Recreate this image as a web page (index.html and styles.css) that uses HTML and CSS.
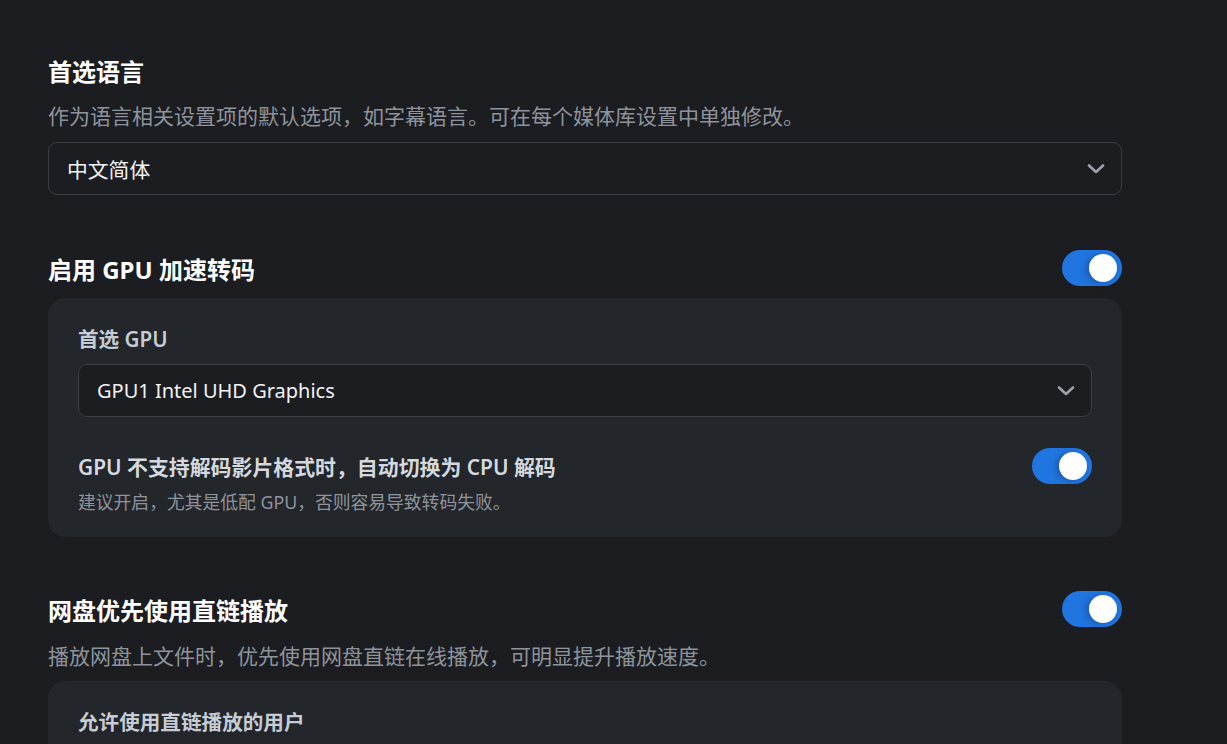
FILE: index.html
```html
<!DOCTYPE html>
<html lang="zh-CN">
<head>
<meta charset="utf-8">
<title>设置</title>
<link rel="stylesheet" href="styles.css">
</head>
<body>
<main class="page">
  <section class="setting">
    <div class="head"><h2 class="title">首选语言</h2></div>
    <p class="desc d1">作为语言相关设置项的默认选项，如字幕语言。可在每个媒体库设置中单独修改。</p>
    <div class="select">
      <span>中文简体</span>
      <svg class="chev" width="18" height="10" viewBox="0 0 18 10"><path d="M2 1.5 L9 8 L16 1.5" fill="none" stroke="#9ea3aa" stroke-width="2.6" stroke-linecap="round" stroke-linejoin="round"/></svg>
    </div>
  </section>

  <section class="setting s2">
    <div class="head">
      <h2 class="title">启用 GPU 加速转码</h2>
      <span class="toggle"><span class="knob"></span></span>
    </div>
    <div class="card">
      <div class="label">首选 GPU</div>
      <div class="select inner">
        <span class="latin">GPU1 Intel UHD Graphics</span>
        <svg class="chev" width="18" height="10" viewBox="0 0 18 10"><path d="M2 1.5 L9 8 L16 1.5" fill="none" stroke="#9ea3aa" stroke-width="2.6" stroke-linecap="round" stroke-linejoin="round"/></svg>
      </div>
      <div class="row">
        <div class="row-text">
          <div class="row-title">GPU 不支持解码影片格式时，自动切换为 CPU 解码</div>
          <div class="row-desc">建议开启，尤其是低配 GPU，否则容易导致转码失败。</div>
        </div>
        <span class="toggle"><span class="knob"></span></span>
      </div>
    </div>
  </section>

  <section class="setting s3">
    <div class="head">
      <h2 class="title">网盘优先使用直链播放</h2>
      <span class="toggle"><span class="knob"></span></span>
    </div>
    <p class="desc d3">播放网盘上文件时，优先使用网盘直链在线播放，可明显提升播放速度。</p>
    <div class="card c3">
      <div class="label">允许使用直链播放的用户</div>
    </div>
  </section>
</main>
</body>
</html>
```

FILE: styles.css
```css
* { box-sizing: border-box; }

html, body {
  margin: 0;
  padding: 0;
  background: #1b1d21;
  height: 100%;
  overflow: hidden;
}

body {
  font-family: "Noto Sans", "Noto Sans CJK SC", sans-serif;
  color: #e6e8eb;
}

.page {
  width: 1122px;
  padding: 52px 0 0 48px;
}

.setting {
  display: flex;
  flex-direction: column;
}

.s2 { margin-top: 55px; }
.s3 { margin-top: 54px; }

.head {
  height: 36px;
  display: flex;
  align-items: center;
  justify-content: space-between;
}

.title {
  margin: 0;
  font-size: 24px;
  font-weight: 700;
  color: #ffffff;
  line-height: 32px;
  padding-top: 3px;
}

.desc {
  margin: 11px 0 0;
  font-size: 21px;
  line-height: 30px;
  color: #8f949c;
}

.d1 { margin-top: 13px; }
.d3 { margin-top: 14px; }

.select {
  margin-top: 11px;
  height: 53px;
  border: 1px solid #3a3d43;
  border-radius: 9px;
  background: #1b1d21;
  display: flex;
  align-items: center;
  justify-content: space-between;
  padding: 0 16px 0 18px;
  font-size: 20.8px;
  color: #f2f3f5;
}

.latin { font-size: 20px; }

.chev { display: block; }

.card {
  margin-top: 12px;
  background: #23262b;
  border-radius: 17px;
  padding: 30px 30px 22px;
}

.c3 { margin-top: 10px; height: 80px; }

.label {
  font-size: 20.6px;
  font-weight: 600;
  line-height: 22px;
  color: #c6ccd4;
}

.select.inner {
  margin-top: 14px;
}

.row {
  margin-top: 31px;
  display: flex;
  justify-content: space-between;
  align-items: flex-start;
}

.row-text {
  padding-top: 4px;
}

.row-title {
  font-size: 20.9px;
  font-weight: 600;
  line-height: 30px;
  color: #d4d9df;
}

.row-desc {
  margin-top: 7px;
  font-size: 17.8px;
  line-height: 26px;
  color: #8f949c;
}

.toggle {
  position: relative;
  flex: none;
  width: 60px;
  height: 36px;
  border-radius: 18px;
  background: #2175e0;
}

.knob {
  position: absolute;
  top: 4px;
  right: 5px;
  width: 28px;
  height: 28px;
  border-radius: 50%;
  background: #ffffff;
  box-shadow: -3px 1px 6px rgba(10, 40, 90, 0.35);
}
```
